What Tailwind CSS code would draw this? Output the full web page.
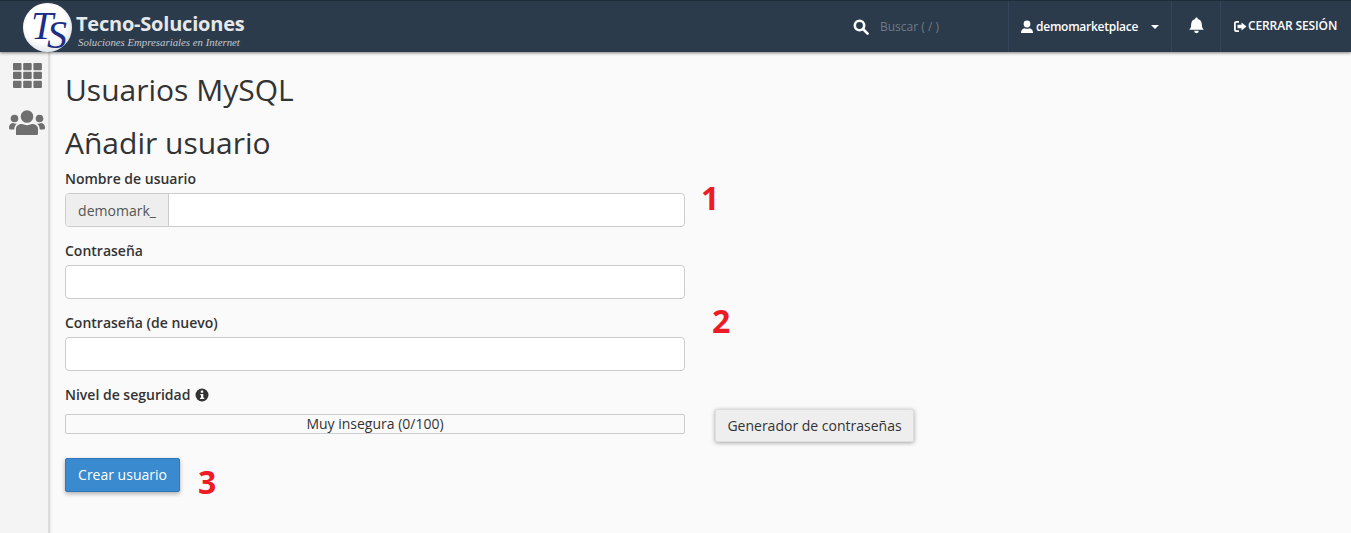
<!DOCTYPE html>
<html lang="es">
<head>
<meta charset="utf-8">
<title>Usuarios MySQL</title>
<script src="https://cdn.jsdelivr.net/npm/@tailwindcss/browser@4"></script>
</head>
<body class="m-0 h-[533px] w-[1351px] overflow-hidden bg-[#fafafa] font-['Open_Sans',sans-serif] text-[14px] text-[#333]">
<header class="relative z-10 flex h-[52px] items-center border-t border-[#1f2d3a] bg-[#2b3b4c] shadow-[0_1px_3px_rgba(0,0,0,0.5)]">
  <div class="flex h-full flex-1 items-center pl-[23px]">
    <div class="relative mt-[1px] h-[49px] w-[49px] shrink-0 rounded-full bg-[radial-gradient(circle_at_45%_40%,#ffffff_50%,#c3c9d3_100%)] font-['Liberation_Serif',serif] italic leading-none text-[#1c2f86]">
      <span class="absolute left-[8px] top-[3px] text-[40px] leading-[40px] tracking-[-6px]">T</span>
      <span class="absolute left-[24px] top-[12px] text-[40px] leading-[40px]">S</span>
    </div>
    <div class="ml-[4px] flex flex-col pt-[6px]">
      <span class="text-[20px] leading-[24px] font-bold tracking-[-0.22px] text-[#e6e8ea]">Tecno-Soluciones</span>
      <span class="mt-[1px] pl-[2px] font-['Liberation_Serif',serif] text-[10.8px] leading-[11px] italic text-[#c4c8cc]">Soluciones Empresariales en Internet</span>
    </div>
  </div>
  <div class="flex h-full w-[178px] items-center pl-[23px]">
    <svg class="h-[16px] w-[16px] text-white" viewBox="0 0 16 16" fill="none" stroke="currentColor" stroke-width="2.6"><circle cx="6.500" cy="6.500" r="4.700"/><path d="M10 10l4.600 4.600" stroke-linecap="round"/></svg>
    <span class="ml-[11px] text-[12px] text-[#6f7a85]">Buscar ( / )</span>
  </div>
  <div class="flex h-full w-[163px] items-center border-l border-[#34455a] pl-[11px] text-white">
    <svg class="h-[14px] w-[14px]" viewBox="0 0 14 14" fill="currentColor"><circle cx="7" cy="4" r="3.400"/><path d="M1 13c0-3 1.500-4.300 3.500-4.800 1.500.7 3.500.7 5 0C11.500 8.700 13 10 13 13z"/></svg>
    <span class="ml-[2px] text-[12px] font-[560] tracking-[-0.25px]">demomarketplace</span>
    <span class="ml-[13px] h-0 w-0 border-x-[4px] border-t-[4px] border-x-transparent border-t-white"></span>
  </div>
  <div class="flex h-full w-[49px] items-center justify-center border-l border-[#34455a] text-white">
    <svg class="mb-[2px] h-[17px] w-[17px]" viewBox="0 0 16 16" fill="currentColor"><path d="M8 0.500a1.200 1.200 0 0 1 1.200 1.300C11.500 2.300 13 4.200 13 6.800c0 3.200 1 4.200 2 5.200H1c1-1 2-2 2-5.200C3 4.200 4.500 2.300 6.800 1.800A1.200 1.200 0 0 1 8 .5z"/><path d="M5.800 13h4.400a2.200 2.200 0 0 1-4.400 0z"/></svg>
  </div>
  <div class="relative flex h-full w-[131px] items-center border-l border-[#34455a] pl-[12px] text-white">
    <svg class="mb-[1px] h-[13px] w-[14px]" viewBox="0 0 14 13" fill="currentColor"><path d="M6 1H3.500A2.500 2.500 0 0 0 1 3.500v6A2.500 2.500 0 0 0 3.500 12H6v-1.800H3.500a.7.7 0 0 1-.7-.7v-6a.7.7 0 0 1 .7-.7H6z"/><path d="M8.500 2.500L13.500 6.500 8.500 10.500V8.200H4.500V4.800h4z"/></svg>
    <span class="mb-[1px] ml-[1px] text-[12px] font-[560] tracking-[-0.12px]">CERRAR SESIÓN</span>
  </div>
</header>
<div class="flex h-[481px]">
  <aside class="flex w-[50px] flex-col items-center border-r-[2px] border-[#dcdcdc] bg-[#f4f4f4] pr-[1px] pt-[11px] text-[#6f6f6f] shadow-[1px_0_2px_rgba(0,0,0,0.08)]">
    <svg class="ml-[7px] h-[25px] w-[29px]" viewBox="0 0 29 26" fill="currentColor" preserveAspectRatio="none">
      <rect x="0" y="0" width="8.500" height="7.500" rx="1"/><rect x="10.200" y="0" width="8.500" height="7.500" rx="1"/><rect x="20.400" y="0" width="8.500" height="7.500" rx="1"/>
      <rect x="0" y="9.200" width="8.500" height="7.500" rx="1"/><rect x="10.200" y="9.200" width="8.500" height="7.500" rx="1"/><rect x="20.400" y="9.200" width="8.500" height="7.500" rx="1"/>
      <rect x="0" y="18.400" width="8.500" height="7.500" rx="1"/><rect x="10.200" y="18.400" width="8.500" height="7.500" rx="1"/><rect x="20.400" y="18.400" width="8.500" height="7.500" rx="1"/>
    </svg>
    <svg class="ml-[7px] mt-[22px] h-[26px] w-[36px]" viewBox="0 0 36 26" fill="currentColor">
      <circle cx="18" cy="6.500" r="6.300"/><circle cx="5.500" cy="8.500" r="3.800"/><circle cx="30.500" cy="8.500" r="3.800"/>
      <path d="M7 25c0-.5 0-5 0-6 0-3.500 3-5 6-5 3 1.500 7 1.500 10 0 3 0 6 1.500 6 5v4.500A1.500 1.500 0 0 1 27.500 25z"/>
      <path d="M0 17.500c0-3 2-4.500 4-4.500 1.500.8 3 .8 4.300.4C6.500 14.500 5.300 16.500 5.200 19.500H1.500A1.500 1.500 0 0 1 0 18z"/>
      <path d="M36 17.500c0-3-2-4.500-4-4.500-1.500.8-3 .8-4.300.4 1.800 1.100 3 3.100 3.100 6.100h3.700a1.500 1.500 0 0 0 1.500-1.500z"/>
    </svg>
  </aside>
  <main class="flex-1 pl-[15px]">
    <h1 class="mt-[18px] text-[30px] leading-[40px] font-normal text-[#333]">Usuarios MySQL</h1>
    <h2 class="mt-[13px] text-[30px] leading-[40px] font-normal text-[#333]">Añadir usuario</h2>
    <div class="mt-[6px] flex">
      <div class="w-[620px]">
        <label class="block text-[14px] leading-[20px] font-[560]">Nombre de usuario</label>
        <div class="mt-[4px] flex h-[34px] rounded-[4px] border border-[#ccc] bg-white">
          <span class="flex w-[103px] items-center justify-center rounded-l-[3px] border-r border-[#ccc] bg-[#eee] text-[#555]">demomark_</span>
          <input type="text" class="flex-1 bg-transparent outline-none">
        </div>
        <label class="mt-[14px] block text-[14px] leading-[20px] font-[560]">Contraseña</label>
        <input type="password" class="mt-[4px] block h-[34px] w-full rounded-[4px] border border-[#ccc] bg-white outline-none">
        <label class="mt-[14px] block text-[14px] leading-[20px] font-[560]">Contraseña (de nuevo)</label>
        <input type="password" class="mt-[4px] block h-[34px] w-full rounded-[4px] border border-[#ccc] bg-white outline-none">
        <label class="mt-[14px] flex items-center gap-[5px] text-[14px] leading-[20px] font-[560]">Nivel de seguridad
          <svg class="h-[14px] w-[14px] text-[#333]" viewBox="0 0 14 14"><circle cx="7" cy="7" r="6.500" fill="currentColor"/><rect x="5.800" y="2.500" width="2.400" height="2.200" rx=".5" fill="#fafafa"/><path d="M5.300 6h3v3.800h1v1.300H5v-1.300h1V7.300h-.7z" fill="#fafafa"/></svg>
        </label>
        <div class="mt-[9px] flex h-[20px] items-center justify-center rounded-[2px] border border-[#ccc] pb-[2px] text-[14px] text-[#333]">Muy insegura (0/100)</div>
      </div>
      <div class="relative w-[100px]">
        <span class="absolute left-[16px] top-[7px] text-[32px] leading-[44px] font-bold text-[#ed1c24]">1</span>
        <span class="absolute left-[27px] top-[130px] text-[32px] leading-[44px] font-bold text-[#ed1c24]">2</span>
        <button class="absolute left-[30px] top-[240px] h-[33px] w-[199px] whitespace-nowrap rounded-[2px] border border-[#ddd] bg-[#eee] text-[14px] text-[#333] shadow-[0_1px_4px_rgba(0,0,0,0.35)]">Generador de contraseñas</button>
      </div>
    </div>
    <div class="mt-[24px] flex items-start">
      <button class="h-[34px] w-[115px] rounded-[2px] border border-[#2d77b8] bg-[#3a8acf] pb-[2px] text-[14px] text-white shadow-[0_2px_4px_rgba(0,0,0,0.3)]">Crear usuario</button>
      <span class="ml-[18px] mt-[2px] text-[32px] leading-[44px] font-bold text-[#ed1c24]">3</span>
    </div>
  </main>
</div>
</body>
</html>
